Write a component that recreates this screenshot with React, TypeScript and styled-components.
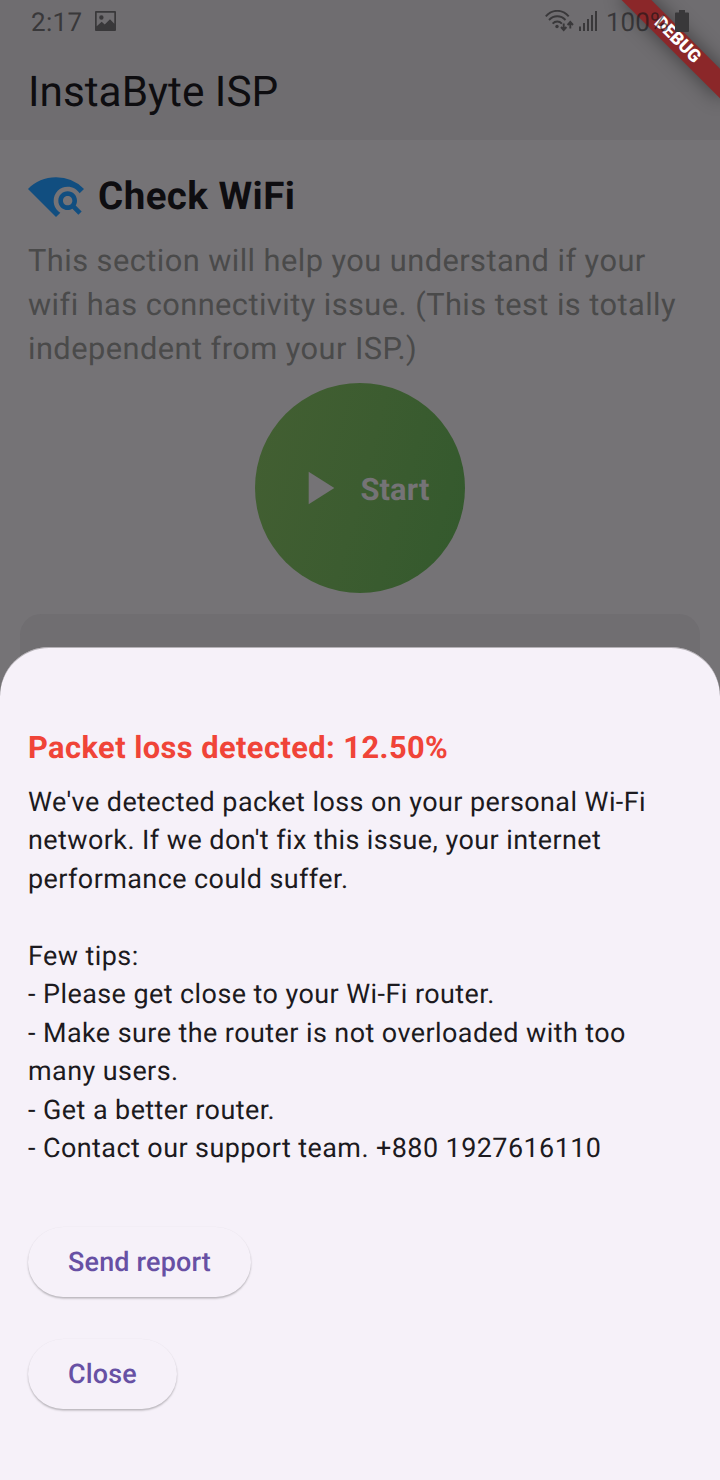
import React from "react";
import styled, { createGlobalStyle } from "styled-components";
import { MdWifiFind } from "react-icons/md";

const GlobalStyle = createGlobalStyle`
  * { box-sizing: border-box; }
  body { margin: 0; background: #757376; font-family: Roboto, "Liberation Sans", sans-serif; text-rendering: geometricPrecision; }
`;

const Screen = styled.div`
  position: relative;
  display: flex;
  flex-direction: column;
  width: 720px;
  height: 1480px;
  overflow: hidden;
  background: #757376;
`;

const Header = styled.header`
  height: 140px;
  flex: none;
  background: #6f6d70;
`;

const StatusBar = styled.div`
  position: relative;
  z-index: 3;
  display: flex;
  align-items: center;
  justify-content: space-between;
  height: 42px;
  padding: 0 31px 0 31px;
  color: #39383a;
  font-size: 26px;
  line-height: 42px;
`;

const StatusGroup = styled.div`
  display: flex;
  align-items: center;

  svg {
    flex: none;
    display: block;
  }
`;

const Clock = styled.span`
  width: 64px;
  padding-top: 3px;
  letter-spacing: 0.3px;
`;

const Signal = styled.span`
  margin-left: 5px;
`;

const Percent = styled.span`
  width: 69px;
  margin-left: 9px;
  padding-top: 3px;
  color: rgba(20, 20, 22, 0.6);
  white-space: nowrap;
`;

const AppTitle = styled.h1`
  margin: 0;
  padding: 1px 28px 0;
  color: #0e0d10;
  font-size: 42.35px;
  font-weight: 400;
  line-height: 99px;
`;

const Section = styled.main`
  display: flex;
  flex-direction: column;
  flex: none;
  padding: 28px 20px 0;
`;

const SectionHeading = styled.div`
  display: flex;
  align-items: center;
  gap: 14px;
  height: 56px;
  padding-left: 8px;
  color: #114e80;
`;

const SectionTitle = styled.h2`
  margin: 0;
  color: #0e0d10;
  font-size: 38.5px;
  font-weight: 700;
  line-height: 55px;
  letter-spacing: 0.44px;
`;

const Description = styled.p`
  margin: 15px 0 0;
  padding-left: 8px;
  color: #4a4a4a;
  font-size: 30.8px;
  line-height: 44px;
  letter-spacing: 0.4375px;
  white-space: nowrap;
`;

const StartButton = styled.button`
  display: flex;
  align-items: center;
  justify-content: center;
  gap: 14px;
  align-self: center;
  width: 210px;
  height: 210px;
  margin-top: 12px;
  padding: 0;
  border: 0;
  border-radius: 50%;
  background: linear-gradient(105deg, #435f32 0%, #3c5c30 50%, #33592d 100%);
  color: #757376;
  font: 700 30.8px Roboto, sans-serif;
  letter-spacing: 0.175px;
  text-rendering: inherit;
`;

const StartLabel = styled.span`
  padding-top: 2px;
`;

const ResultCard = styled.div`
  height: 120px;
  margin-top: 21px;
  border-radius: 21px;
  background: #706e71;
`;

const Ribbon = styled.div`
  position: absolute;
  z-index: 2;
  left: 608px;
  top: 31px;
  width: 140px;
  height: 21px;
  padding-right: 3px;
  transform: rotate(45deg);
  background: #8b2729;
  box-shadow: 0 0 20px rgba(0, 0, 0, 0.45);
  color: #fff;
  font-size: 17.85px;
  font-weight: 900;
  line-height: 20px;
  text-align: center;
`;

const Sheet = styled.section`
  position: absolute;
  z-index: 4;
  inset: 647px 0 0;
  display: flex;
  flex-direction: column;
  align-items: flex-start;
  padding: 80px 28px 0;
  border-radius: 49px 49px 0 0;
  background: #f6f1f9;
  box-shadow: inset 0 1px 0 rgba(117, 115, 118, 0.5);
`;

const Alert = styled.h3`
  margin: 0;
  color: #f04438;
  font-size: 30.8px;
  font-weight: 700;
  line-height: 42px;
  letter-spacing: 0.4375px;
`;

const Message = styled.p`
  margin: 13.5px 0 0;
  color: #1c1a20;
  font-size: 26.95px;
  line-height: 38.5px;
  letter-spacing: 0.4375px;
  white-space: pre;
`;

const SheetButton = styled.button<{ $width: number; $gap: number }>`
  width: ${(p) => p.$width}px;
  height: 70px;
  margin-top: ${(p) => p.$gap}px;
  padding: 0;
  border: 0;
  border-radius: 35px;
  background: #f6f1f9;
  box-shadow: 0 1.5px 2px rgba(0, 0, 0, 0.25), 0 0 1px rgba(0, 0, 0, 0.04);
  color: #6750a4;
  font: 500 26.95px Roboto, sans-serif;
  letter-spacing: 0.175px;
  text-rendering: inherit;
`;

const description = [
  "This section will help you understand if your",
  "wifi has connectivity issue. (This test is totally",
  "independent from your ISP.)",
];

const message = `We've detected packet loss on your personal Wi-Fi
network. If we don't fix this issue, your internet
performance could suffer.

Few tips:
- Please get close to your Wi-Fi router.
- Make sure the router is not overloaded with too
many users.
- Get a better router.
- Contact our support team. +880 1927616110`;

const PictureIcon = () => (
  <svg width="21" height="20" viewBox="0 0 22 20" preserveAspectRatio="none">
    <path
      fill="currentColor"
      fillRule="evenodd"
      d="M1 0h20a1 1 0 0 1 1 1v18a1 1 0 0 1-1 1H1a1 1 0 0 1-1-1V1a1 1 0 0 1 1-1ZM1.800 1.800v13.400L7 10.800l3.200 2.700 5.500-5.300 4.500 4.500V1.800ZM6.700 4.200a2.300 2.300 0 1 1 0 4.600 2.300 2.300 0 0 1 0-4.600Z"
    />
  </svg>
);

const WifiIcon = () => (
  <svg width="29" height="22" viewBox="0 0 29 22" fill="none" stroke="currentColor" strokeWidth="1.900">
    <path d="M.8 6.300C7.200-1 17.300-1 23.700 6.300M4 10c4.600-5 11.900-5 16.500 0M7.600 13.600c2.700-2.800 6.600-2.800 9.300 0" />
    <circle cx="12" cy="16.500" r="1.700" fill="currentColor" stroke="none" />
    <path d="M18.700 13.500v6.500m-2.700-3 2.700 3 2.700-3M25.300 18.500v-6.500m-2.700 3 2.700-3 2.700 3" strokeWidth="1.900" />
  </svg>
);

const SignalIcon = () => (
  <svg width="18" height="20" viewBox="0 0 18 20" fill="currentColor">
    <path d="M0 15.500h2V20H0zM4 12h2v8H4zM8 8h2v12H8zM12 4h2v16h-2zM16 0h2v20h-2z" />
  </svg>
);

const BatteryIcon = () => (
  <svg width="14" height="22" viewBox="0 0 14 22" fill="currentColor">
    <path d="M4 0h6v2.500h3a1 1 0 0 1 1 1V21a1 1 0 0 1-1 1H1a1 1 0 0 1-1-1V3.500a1 1 0 0 1 1-1h3Z" />
  </svg>
);

const PlayIcon = () => (
  <svg width="56" height="56" viewBox="0 0 24 24" fill="currentColor">
    <path d="M8 5v14l11-7z" />
  </svg>
);

export default function App() {
  return (
    <>
      <GlobalStyle />
      <Screen>
        <Header>
          <StatusBar>
            <StatusGroup>
              <Clock>2:17</Clock>
              <PictureIcon />
            </StatusGroup>
            <StatusGroup>
              <WifiIcon />
              <Signal><SignalIcon /></Signal>
              <Percent>100%</Percent>
              <BatteryIcon />
            </StatusGroup>
          </StatusBar>
          <AppTitle>InstaByte ISP</AppTitle>
        </Header>
        <Section>
          <SectionHeading>
            <MdWifiFind size={56} />
            <SectionTitle>Check WiFi</SectionTitle>
          </SectionHeading>
          <Description>
            {description.map((line) => (
              <React.Fragment key={line}>
                {line}
                <br />
              </React.Fragment>
            ))}
          </Description>
          <StartButton>
            <PlayIcon />
            <StartLabel>Start</StartLabel>
          </StartButton>
          <ResultCard />
        </Section>
        <Ribbon>DEBUG</Ribbon>
        <Sheet>
          <Alert>Packet loss detected: 12.50%</Alert>
          <Message>{message}</Message>
          <SheetButton $width={223} $gap={59.5}>Send report</SheetButton>
          <SheetButton $width={149} $gap={42}>Close</SheetButton>
        </Sheet>
      </Screen>
    </>
  );
}
